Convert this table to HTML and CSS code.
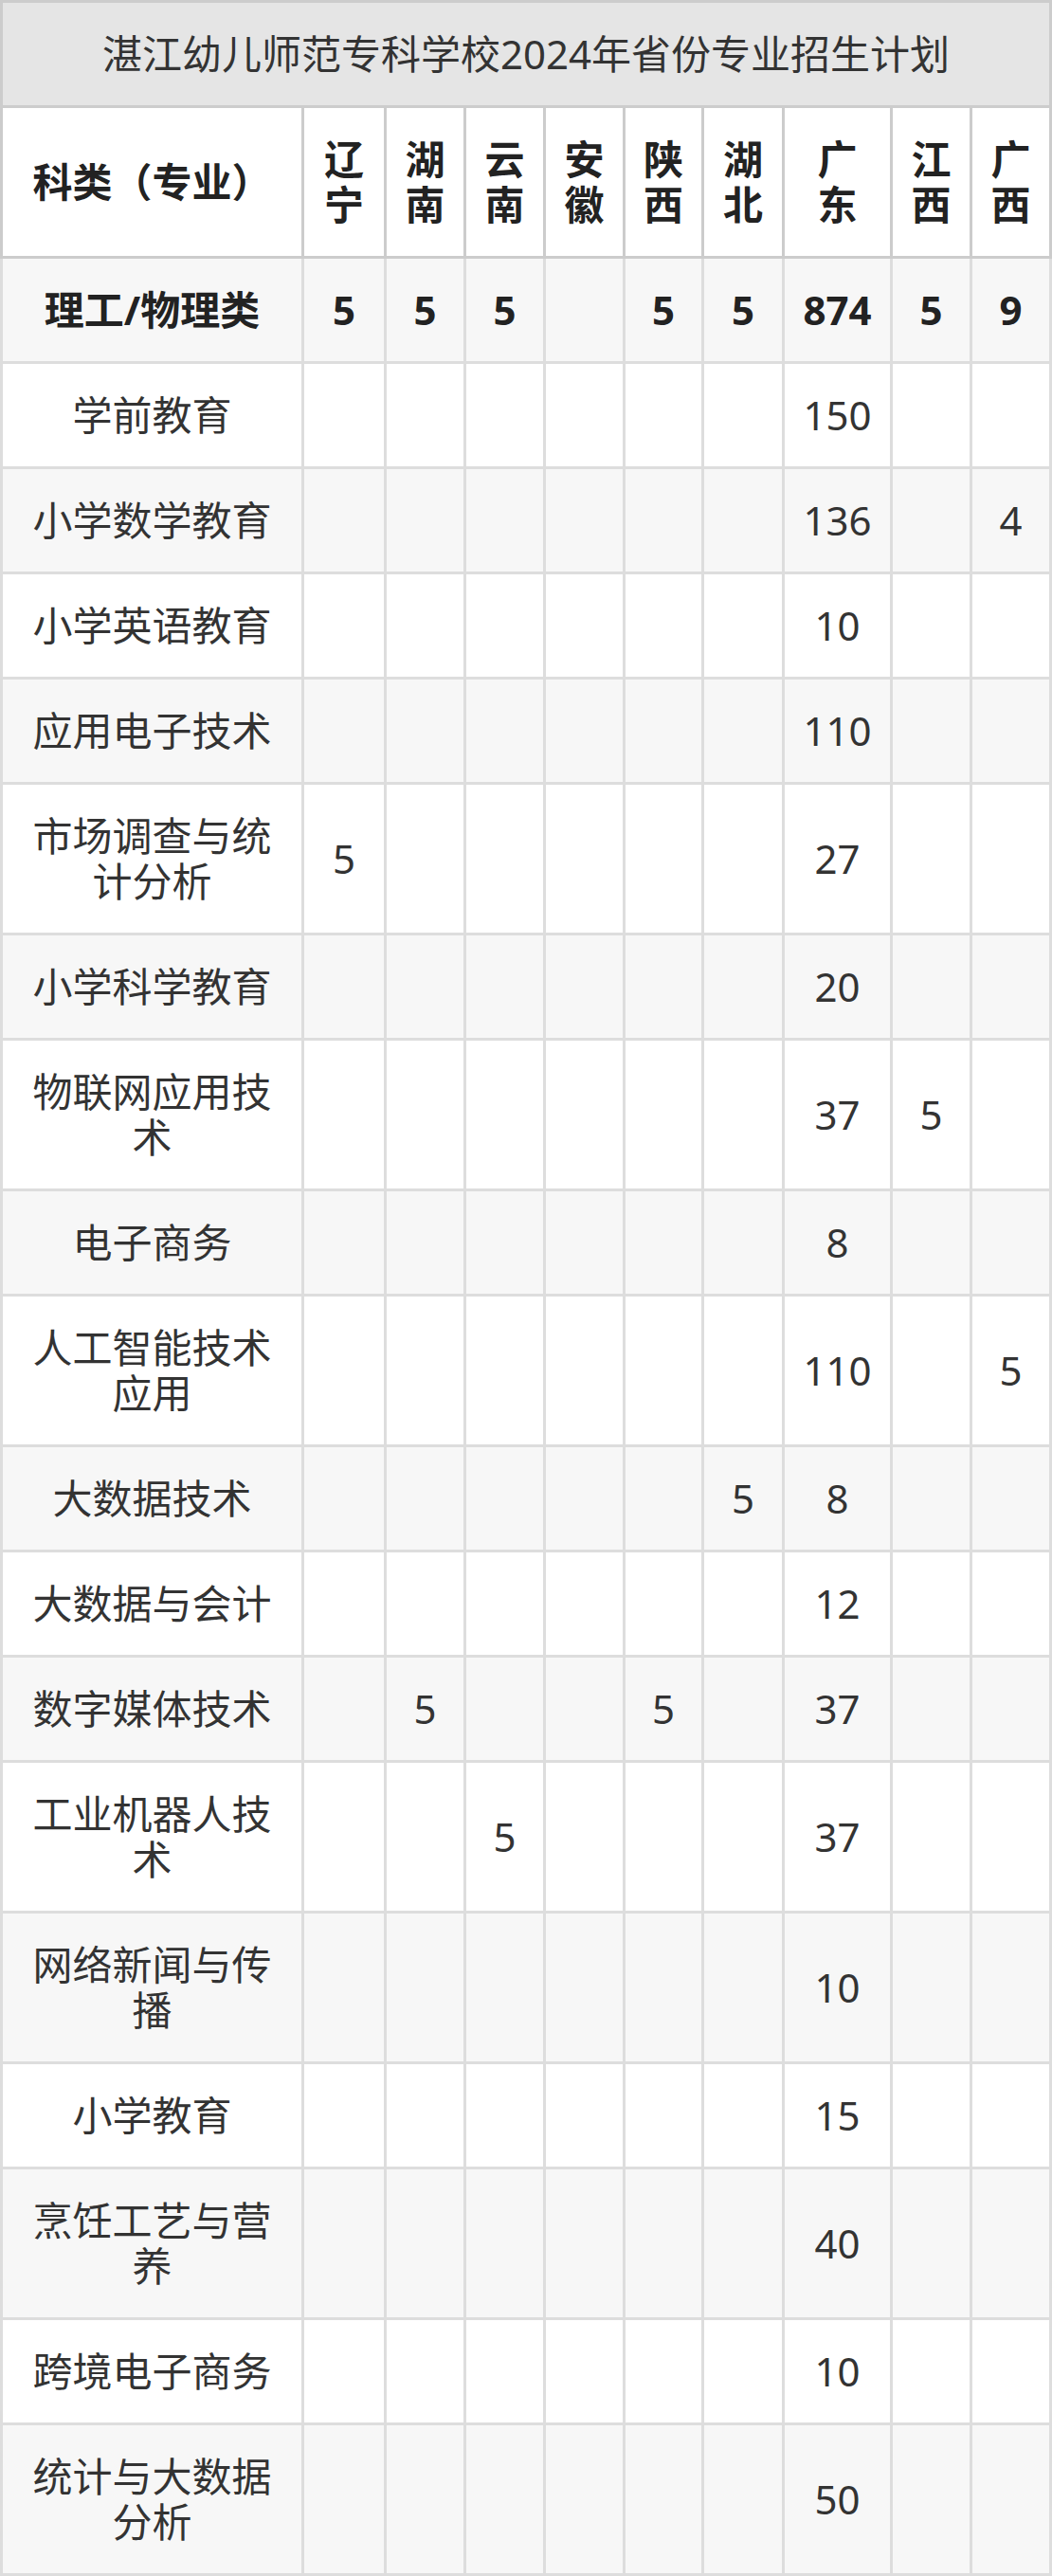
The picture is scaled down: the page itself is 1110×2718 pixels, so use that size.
FILE: index.html
```html
<!DOCTYPE html>
<html lang="zh-CN">
<head>
<meta charset="utf-8">
<title>湛江幼儿师范专科学校2024年省份专业招生计划</title>
<link rel="stylesheet" href="styles.css">
</head>
<body>
<table class="plan">
  <colgroup>
    <col class="w-name">
    <col class="w-84">
    <col class="w-81">
    <col class="w-81">
    <col class="w-81">
    <col class="w-80">
    <col class="w-82">
    <col class="w-111">
    <col class="w-81">
    <col class="w-81">
  </colgroup>
  <tr class="title-row"><th colspan="10" class="title">湛江幼儿师范专科学校2024年省份专业招生计划</th></tr>
  <tr class="head-row">
    <th>科类（专业）</th>
    <th>辽宁</th><th>湖南</th><th>云南</th><th>安徽</th><th>陕西</th><th>湖北</th><th>广东</th><th>江西</th><th>广西</th>
  </tr>
  <tr class="cat-row">
    <td>理工/物理类</td><td>5</td><td>5</td><td>5</td><td></td><td>5</td><td>5</td><td>874</td><td>5</td><td>9</td>
  </tr>
  <tr><td>学前教育</td><td></td><td></td><td></td><td></td><td></td><td></td><td>150</td><td></td><td></td></tr>
  <tr><td>小学数学教育</td><td></td><td></td><td></td><td></td><td></td><td></td><td>136</td><td></td><td>4</td></tr>
  <tr><td>小学英语教育</td><td></td><td></td><td></td><td></td><td></td><td></td><td>10</td><td></td><td></td></tr>
  <tr><td>应用电子技术</td><td></td><td></td><td></td><td></td><td></td><td></td><td>110</td><td></td><td></td></tr>
  <tr><td>市场调查与统计分析</td><td>5</td><td></td><td></td><td></td><td></td><td></td><td>27</td><td></td><td></td></tr>
  <tr><td>小学科学教育</td><td></td><td></td><td></td><td></td><td></td><td></td><td>20</td><td></td><td></td></tr>
  <tr><td>物联网应用技术</td><td></td><td></td><td></td><td></td><td></td><td></td><td>37</td><td>5</td><td></td></tr>
  <tr><td>电子商务</td><td></td><td></td><td></td><td></td><td></td><td></td><td>8</td><td></td><td></td></tr>
  <tr><td>人工智能技术应用</td><td></td><td></td><td></td><td></td><td></td><td></td><td>110</td><td></td><td>5</td></tr>
  <tr><td>大数据技术</td><td></td><td></td><td></td><td></td><td></td><td>5</td><td>8</td><td></td><td></td></tr>
  <tr><td>大数据与会计</td><td></td><td></td><td></td><td></td><td></td><td></td><td>12</td><td></td><td></td></tr>
  <tr><td>数字媒体技术</td><td></td><td>5</td><td></td><td></td><td>5</td><td></td><td>37</td><td></td><td></td></tr>
  <tr><td>工业机器人技术</td><td></td><td></td><td>5</td><td></td><td></td><td></td><td>37</td><td></td><td></td></tr>
  <tr><td>网络新闻与传播</td><td></td><td></td><td></td><td></td><td></td><td></td><td>10</td><td></td><td></td></tr>
  <tr><td>小学教育</td><td></td><td></td><td></td><td></td><td></td><td></td><td>15</td><td></td><td></td></tr>
  <tr><td>烹饪工艺与营养</td><td></td><td></td><td></td><td></td><td></td><td></td><td>40</td><td></td><td></td></tr>
  <tr><td>跨境电子商务</td><td></td><td></td><td></td><td></td><td></td><td></td><td>10</td><td></td><td></td></tr>
  <tr><td>统计与大数据分析</td><td></td><td></td><td></td><td></td><td></td><td></td><td>50</td><td></td><td></td></tr>
</table>
</body>
</html>
```
FILE: styles.css
```css
html, body {
  margin: 0;
  padding: 0;
  background: #ffffff;
}

.plan {
  width: 1110px;
  table-layout: fixed;
  border-collapse: separate;
  border-spacing: 3px;
  background: #dddddd;
  font-family: "Noto Sans", "Noto Sans CJK SC", sans-serif;
  font-size: 42px;
  line-height: 48px;
  color: #333333;
}

.w-name { width: 315px; }
.w-84 { width: 84px; }
.w-81 { width: 81px; }
.w-80 { width: 80px; }
.w-82 { width: 82px; }
.w-111 { width: 111px; }

.plan th,
.plan td {
  padding: 30px 16px;
  text-align: center;
  vertical-align: middle;
  background: #ffffff;
  font-weight: 400;
}

.plan th {
  box-shadow: 0 0 0 3px #cccccc;
}

.plan .title {
  background: #e5e5e5;
  color: #333333;
  font-weight: 400;
  padding: 30px 0;
}

.head-row th {
  font-weight: 700;
  color: #222222;
}

.cat-row td {
  font-weight: 700;
  color: #222222;
}

.plan tr:nth-child(odd) td {
  background: #f7f7f7;
}
```
